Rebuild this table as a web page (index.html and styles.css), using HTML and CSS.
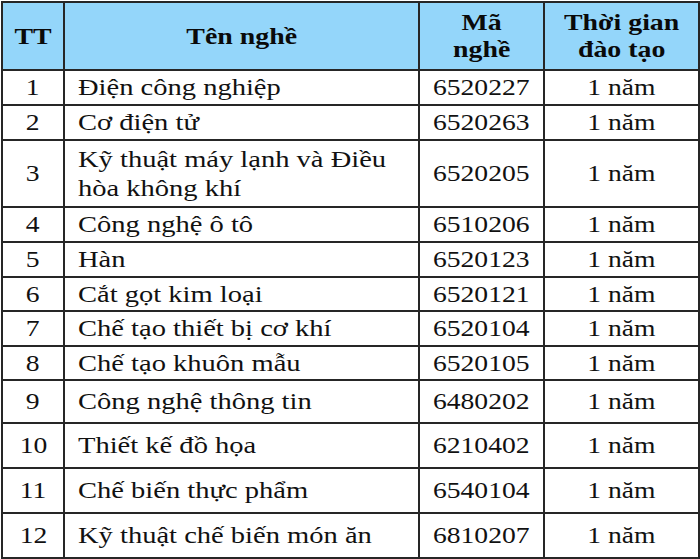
FILE: index.html
```html
<!DOCTYPE html>
<html lang="vi">
<head>
<meta charset="utf-8">
<title>Danh sách nghề</title>
<link rel="stylesheet" href="styles.css">
</head>
<body>
<table class="grid">
  <colgroup>
    <col class="c-tt">
    <col class="c-name">
    <col class="c-code">
    <col class="c-time">
  </colgroup>
  <thead>
    <tr class="head">
      <th><span class="t">TT</span></th>
      <th><span class="t">Tên nghề</span></th>
      <th><span class="t">Mã<br>nghề</span></th>
      <th><span class="t">Thời gian<br>đào tạo</span></th>
    </tr>
  </thead>
  <tbody>
    <tr class="r35"><td class="tt"><span class="t">1</span></td><td class="name"><span class="t">Điện công nghiệp</span></td><td class="code"><span class="t">6520227</span></td><td class="time"><span class="t">1 năm</span></td></tr>
    <tr class="r35"><td class="tt"><span class="t">2</span></td><td class="name"><span class="t">Cơ điện tử</span></td><td class="code"><span class="t">6520263</span></td><td class="time"><span class="t">1 năm</span></td></tr>
    <tr class="r67"><td class="tt"><span class="t">3</span></td><td class="name"><span class="t">Kỹ thuật máy lạnh và Điều<br>hòa không khí</span></td><td class="code"><span class="t">6520205</span></td><td class="time"><span class="t">1 năm</span></td></tr>
    <tr class="r35"><td class="tt"><span class="t">4</span></td><td class="name"><span class="t">Công nghệ ô tô</span></td><td class="code"><span class="t">6510206</span></td><td class="time"><span class="t">1 năm</span></td></tr>
    <tr class="r35"><td class="tt"><span class="t">5</span></td><td class="name"><span class="t">Hàn</span></td><td class="code"><span class="t">6520123</span></td><td class="time"><span class="t">1 năm</span></td></tr>
    <tr class="r34"><td class="tt"><span class="t">6</span></td><td class="name"><span class="t">Cắt gọt kim loại</span></td><td class="code"><span class="t">6520121</span></td><td class="time"><span class="t">1 năm</span></td></tr>
    <tr class="r35"><td class="tt"><span class="t">7</span></td><td class="name"><span class="t">Chế tạo thiết bị cơ khí</span></td><td class="code"><span class="t">6520104</span></td><td class="time"><span class="t">1 năm</span></td></tr>
    <tr class="r34"><td class="tt"><span class="t">8</span></td><td class="name"><span class="t">Chế tạo khuôn mẫu</span></td><td class="code"><span class="t">6520105</span></td><td class="time"><span class="t">1 năm</span></td></tr>
    <tr class="r43"><td class="tt"><span class="t">9</span></td><td class="name"><span class="t">Công nghệ thông tin</span></td><td class="code"><span class="t">6480202</span></td><td class="time"><span class="t">1 năm</span></td></tr>
    <tr class="r45"><td class="tt"><span class="t">10</span></td><td class="name"><span class="t">Thiết kế đồ họa</span></td><td class="code"><span class="t">6210402</span></td><td class="time"><span class="t">1 năm</span></td></tr>
    <tr class="r45"><td class="tt"><span class="t">11</span></td><td class="name"><span class="t">Chế biến thực phẩm</span></td><td class="code"><span class="t">6540104</span></td><td class="time"><span class="t">1 năm</span></td></tr>
    <tr class="r45"><td class="tt"><span class="t">12</span></td><td class="name"><span class="t">Kỹ thuật chế biến món ăn</span></td><td class="code"><span class="t">6810207</span></td><td class="time"><span class="t">1 năm</span></td></tr>
  </tbody>
</table>
</body>
</html>
```

FILE: styles.css
```css
html, body {
  margin: 0;
  padding: 0;
  background: #ffffff;
}

body {
  padding: 1px 0 0 1px;
  font-family: "Liberation Serif", "Times New Roman", serif;
  color: #111111;
}

.grid {
  border-collapse: collapse;
  table-layout: fixed;
  width: 697px;
}

.c-tt { width: 62px; }
.c-name { width: 355px; }
.c-code { width: 125px; }
.c-time { width: 155px; }

.grid th,
.grid td {
  border: 2px solid #262626;
  padding: 0;
  vertical-align: middle;
}

.t {
  display: inline-block;
  transform-origin: center center;
}

.head th {
  background: #94d6fa;
  font-weight: bold;
  font-size: 24px;
  line-height: 27px;
  text-align: center;
  height: 66px;
  color: #0a0a0a;
}

.head th .t {
  transform: scaleX(1.16);
}

.grid td {
  font-size: 23px;
  line-height: 29px;
}

.grid td .t {
  transform: scaleX(1.2);
}

.tt,
.code,
.time {
  text-align: center;
}

.name {
  text-align: left;
  padding-left: 13px !important;
}

.grid td.name .t {
  transform-origin: left center;
  transform: scaleX(1.24);
}

.r34 td { height: 32px; }
.r35 td { height: 33px; }
.r43 td { height: 41px; }
.r45 td { height: 43px; }
.r67 td { height: 65px; }
```
